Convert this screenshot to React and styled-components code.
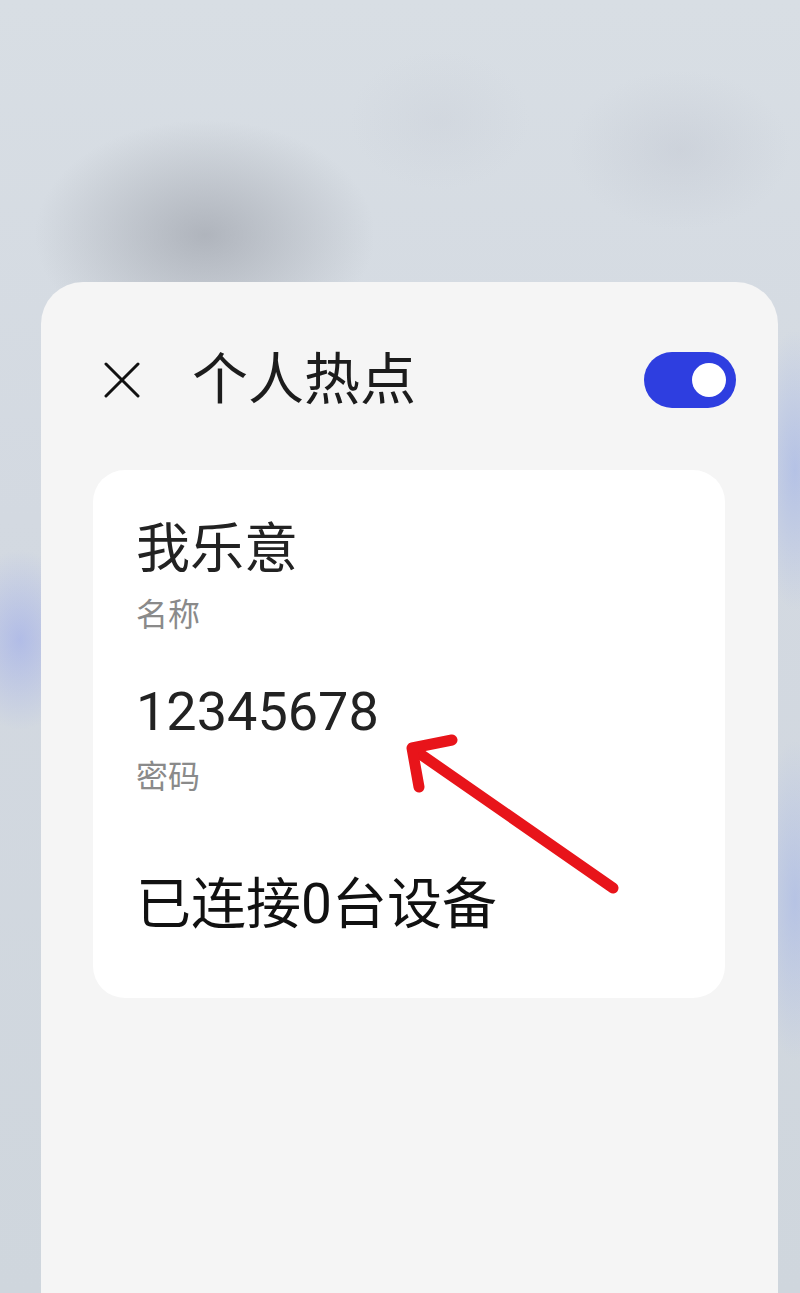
import React from "react";
import styled, { createGlobalStyle } from "styled-components";

const GlobalStyle = createGlobalStyle`
  html, body {
    margin: 0;
    padding: 0;
    background: #d4dae1;
  }
  body {
    font-family: "Roboto", "Noto Sans CJK SC", sans-serif;
  }
`;

const Screen = styled.div`
  position: relative;
  height: 1293px;
  overflow: hidden;
  padding: 282px 22px 0 41px;
  box-sizing: border-box;
  background:
    radial-gradient(ellipse 170px 115px at 205px 235px, rgba(150, 154, 163, 0.6), transparent),
    radial-gradient(ellipse 110px 80px at 680px 150px, rgba(180, 185, 198, 0.28), transparent),
    radial-gradient(ellipse 90px 70px at 440px 120px, rgba(190, 195, 206, 0.2), transparent),
    radial-gradient(ellipse 60px 90px at 20px 640px, rgba(150, 165, 235, 0.55), transparent),
    radial-gradient(ellipse 40px 140px at 795px 470px, rgba(160, 178, 232, 0.6), transparent),
    radial-gradient(ellipse 40px 160px at 795px 900px, rgba(160, 178, 232, 0.55), transparent),
    linear-gradient(180deg, #d8dee4 0%, #d3d9e1 40%, #cfd6dd 100%);
`;

const Sheet = styled.div`
  height: 1011px;
  background: #f5f5f5;
  border-radius: 42px 42px 0 0;
  padding-top: 70px;
  box-sizing: border-box;
`;

const Header = styled.div`
  display: flex;
  align-items: center;
  height: 56px;
  padding: 0 42px 0 63px;
`;

const CloseButton = styled.button`
  display: flex;
  align-items: center;
  justify-content: center;
  width: 36px;
  height: 36px;
  padding: 0;
  border: none;
  background: none;
`;

const Title = styled.h1`
  margin: 0 0 0 52px;
  font-size: 56px;
  line-height: 56px;
  font-weight: 400;
  color: #1c1c1c;
`;

const Toggle = styled.div`
  margin-left: auto;
  width: 92px;
  height: 56px;
  border-radius: 28px;
  background: ${(p) => (p.on ? "#2e3ee0" : "#c8c8c8")};
  display: flex;
  align-items: center;
  justify-content: ${(p) => (p.on ? "flex-end" : "flex-start")};
  padding: 0 10px;
  box-sizing: border-box;
`;

const Knob = styled.span`
  width: 34px;
  height: 34px;
  border-radius: 50%;
  background: #fff;
`;

const Card = styled.div`
  position: relative;
  margin: 62px 53px 0 52px;
  background: #fff;
  border-radius: 32px;
  padding: 48px 43px 62px;
  display: flex;
  flex-direction: column;
`;

const Value = styled.div`
  font-size: ${(p) => p.size || 54}px;
  line-height: 64px;
  color: #222;
  margin-top: ${(p) => p.gap || 0}px;
`;

const Label = styled.div`
  font-size: 32px;
  line-height: 40px;
  color: #8a8a8a;
  margin-top: 13px;
`;

const Status = styled.div`
  font-size: 55px;
  line-height: 64px;
  color: #111;
  margin-top: 75px;
`;

const Arrow = styled.svg`
  position: absolute;
  left: 0;
  top: 0;
  pointer-events: none;
`;

export default function App() {
  return (
    <>
      <GlobalStyle />
      <Screen>
        <Sheet>
          <Header>
            <CloseButton aria-label="关闭">
              <svg width="36" height="36" viewBox="0 0 36 36">
                <path d="M2 2 L34 34 M34 2 L2 34" stroke="#111" strokeWidth="3" strokeLinecap="round" />
              </svg>
            </CloseButton>
            <Title>个人热点</Title>
            <Toggle on>
              <Knob />
            </Toggle>
          </Header>

          <Card>
            <Value>我乐意</Value>
            <Label>名称</Label>
            <Value gap={45}>12345678</Value>
            <Label>密码</Label>
            <Status>已连接0台设备</Status>

            {/* red pointer drawn over the password row */}
            <Arrow width="630" height="530" viewBox="0 0 630 530">
              <g stroke="#e8141a" strokeWidth="11" strokeLinecap="round" strokeLinejoin="round" fill="none">
                <path d="M520 418 L320 279" />
                <path d="M359 270 L319 278 L326 317" />
              </g>
            </Arrow>
          </Card>
        </Sheet>
      </Screen>
    </>
  );
}
